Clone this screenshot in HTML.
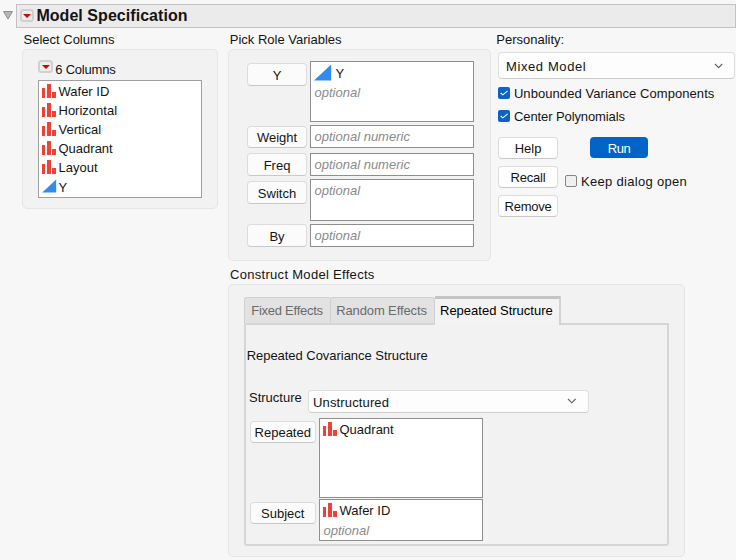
<!DOCTYPE html>
<html><head><meta charset="utf-8">
<style>
html,body{margin:0;padding:0;}
body{width:736px;height:560px;overflow:hidden;background:#f7f7f7;position:relative;font-family:"Liberation Sans",sans-serif;font-size:13px;color:#141414;}
.a{position:absolute;}
.t{position:absolute;white-space:nowrap;line-height:15px;}
.panel{position:absolute;background:#f2f2f2;border:1px solid #e6e6e6;border-radius:5px;box-sizing:border-box;}
.btn{position:absolute;box-sizing:border-box;background:#fbfbfb;border:1px solid #dcdcdc;border-bottom-color:#c8c8c8;border-radius:4px;text-align:center;line-height:15px;}
.box{position:absolute;box-sizing:border-box;background:#fff;border:1px solid #8f8f8f;}
.opt{color:#8a8a8a;font-style:italic;}
.bars{position:absolute;width:15px;height:14px;}
.bars i{position:absolute;bottom:0.5px;background:#ef4136;width:3.2px;}
.bars i:nth-child(1){left:0.1px;height:9.5px;}
.bars i:nth-child(2){left:5px;height:13.5px;width:3.6px;}
.bars i:nth-child(3){left:10.2px;height:5.8px;width:3.7px;}
.redbtn{position:absolute;box-sizing:border-box;border:2px solid #d0d0d0;border-radius:3.5px;background:#ededed;}
.redbtn:after{content:"";position:absolute;left:1.9px;top:2.9px;border-left:4.2px solid transparent;border-right:4.2px solid transparent;border-top:4.5px solid #d40000;}
.cb{position:absolute;width:12px;height:12px;box-sizing:border-box;border-radius:2px;background:#0c63c7;}
.tab{position:absolute;box-sizing:border-box;background:#e2e2e2;border:1.5px solid #d0d0d0;border-bottom:none;border-radius:3px 3px 0 0;color:#6a6a6a;line-height:15px;}
.dd{position:absolute;box-sizing:border-box;background:#fdfdfd;border:1px solid #dedede;border-bottom-color:#cdcdcd;border-radius:4px;}
</style></head><body>

<!-- header -->
<svg class="a" style="left:2px;top:10px;" width="12" height="10"><path d="M1.5 1.5 L10.5 1.5 L6 9 Z" fill="#b6b6b6" stroke="#8e8e8e" stroke-width="1" stroke-linejoin="round"/></svg>
<div class="a" style="left:16px;top:4px;width:720px;height:24px;box-sizing:border-box;background:#ebebeb;border:1px solid #c2c2c2;border-right-width:1px;"></div>
<div class="redbtn" style="left:19.5px;top:9.2px;width:14px;height:12.5px;"></div>
<div class="t" style="left:36.4px;top:7.4px;font-size:16px;line-height:18px;font-weight:bold;letter-spacing:0.05px;">Model Specification</div>

<!-- Select Columns -->
<div class="t" style="left:23.5px;top:32px;">Select Columns</div>
<div class="panel" style="left:22px;top:49px;width:196px;height:160px;"></div>
<div class="redbtn" style="left:38px;top:60px;width:15px;height:13px;"></div>
<div class="t" style="left:55.2px;top:62px;letter-spacing:-0.2px;">6 Columns</div>
<div class="box" style="left:38px;top:80px;width:164px;height:118px;border-color:#a0a0a0;"></div>
<div class="bars" style="left:42px;top:84px;"><i></i><i></i><i></i></div>
<div class="t" style="left:58.5px;top:84px;">Wafer ID</div>
<div class="bars" style="left:42px;top:103px;"><i></i><i></i><i></i></div>
<div class="t" style="left:58.5px;top:103px;">Horizontal</div>
<div class="bars" style="left:42px;top:122px;"><i></i><i></i><i></i></div>
<div class="t" style="left:58.5px;top:122px;">Vertical</div>
<div class="bars" style="left:42px;top:141px;"><i></i><i></i><i></i></div>
<div class="t" style="left:58.5px;top:141px;">Quadrant</div>
<div class="bars" style="left:42px;top:160px;"><i></i><i></i><i></i></div>
<div class="t" style="left:58.5px;top:160px;">Layout</div>
<svg class="a" style="left:42px;top:179px;" width="15" height="14"><path d="M0.2 13.5 L14.2 13.5 L14.2 0.4 Z" fill="#2f8cec"/></svg>
<div class="t" style="left:58.5px;top:179.5px;">Y</div>

<!-- Pick Role Variables -->
<div class="t" style="left:229.8px;top:32px;">Pick Role Variables</div>
<div class="panel" style="left:228px;top:49px;width:263px;height:212px;"></div>
<div class="btn" style="left:247px;top:63px;width:60px;height:23px;padding-top:3.5px;">Y</div>
<div class="box" style="left:310px;top:61px;width:164px;height:61px;"></div>
<svg class="a" style="left:314px;top:64px;" width="18" height="17"><path d="M0 16.6 L17.2 16.6 L17.2 0.4 Z" fill="#2f8cec"/></svg>
<div class="t" style="left:335.5px;top:66px;">Y</div>
<div class="t opt" style="left:314.5px;top:85px;">optional</div>

<div class="btn" style="left:247px;top:125.5px;width:60px;height:22px;padding-top:3.5px;">Weight</div>
<div class="box" style="left:310px;top:125px;width:164px;height:23px;"></div>
<div class="t opt" style="left:314.5px;top:128.5px;">optional numeric</div>

<div class="btn" style="left:247px;top:153px;width:60px;height:22.5px;padding-top:3.5px;">Freq</div>
<div class="box" style="left:310px;top:153px;width:164px;height:23px;"></div>
<div class="t opt" style="left:314.5px;top:156.5px;">optional numeric</div>

<div class="btn" style="left:247px;top:181px;width:60px;height:22.5px;padding-top:3.5px;">Switch</div>
<div class="box" style="left:310px;top:179px;width:164px;height:42px;"></div>
<div class="t opt" style="left:314.5px;top:182.5px;">optional</div>

<div class="btn" style="left:247px;top:224px;width:60px;height:23px;padding-top:3.5px;">By</div>
<div class="box" style="left:310px;top:224px;width:164px;height:23px;"></div>
<div class="t opt" style="left:314.5px;top:227.5px;">optional</div>

<!-- Personality -->
<div class="t" style="left:496.3px;top:31.5px;">Personality:</div>
<div class="dd" style="left:498px;top:52px;width:237px;height:27px;"></div>
<div class="t" style="left:506px;top:58.5px;letter-spacing:0.6px;">Mixed Model</div>
<svg class="a" style="left:713.5px;top:62.5px;" width="10" height="7"><path d="M1 1 L4.6 4.6 L8.2 1" fill="none" stroke="#606060" stroke-width="1.1"/></svg>

<div class="cb" style="left:498px;top:87px;"><svg width="12" height="12" style="position:absolute;left:0;top:0"><path d="M2.7 6 L4.8 7.8 L9.7 3.9" fill="none" stroke="#fff" stroke-width="1.05"/></svg></div>
<div class="t" style="left:513.9px;top:86px;letter-spacing:0.07px;">Unbounded Variance Components</div>
<div class="cb" style="left:498px;top:110px;"><svg width="12" height="12" style="position:absolute;left:0;top:0"><path d="M2.7 6 L4.8 7.8 L9.7 3.9" fill="none" stroke="#fff" stroke-width="1.05"/></svg></div>
<div class="t" style="left:514px;top:109px;letter-spacing:-0.1px;">Center Polynomials</div>

<div class="btn" style="left:498px;top:136.5px;width:60px;height:22px;padding-top:3px;background:#fff;">Help</div>
<div class="a" style="left:590px;top:137px;width:58px;height:21px;background:#0364c8;border-radius:4px;color:#fff;text-align:center;line-height:15px;box-sizing:border-box;padding-top:3.5px;letter-spacing:-0.5px;">Run</div>
<div class="btn" style="left:498px;top:165.5px;width:60px;height:22px;padding-top:3px;background:#fff;letter-spacing:-0.2px;">Recall</div>
<div class="a" style="left:565px;top:175px;width:12px;height:12px;box-sizing:border-box;border:1px solid #858585;border-radius:2px;background:#f0f0f0;"></div>
<div class="t" style="left:581px;top:173.5px;letter-spacing:0.3px;">Keep dialog open</div>
<div class="btn" style="left:498px;top:194.5px;width:60px;height:22px;padding-top:3px;background:#fff;letter-spacing:-0.25px;">Remove</div>

<!-- Construct Model Effects -->
<div class="t" style="left:230px;top:266.5px;letter-spacing:0.3px;">Construct Model Effects</div>
<div class="panel" style="left:228px;top:284px;width:457px;height:272.5px;"></div>
<div class="tab" style="left:244px;top:297px;width:87px;height:26px;padding-left:6.2px;padding-top:5px;letter-spacing:-0.25px;border-right:none;">Fixed Effects</div>
<div class="tab" style="left:329.5px;top:297px;width:105px;height:26px;padding-left:5.7px;padding-top:5px;letter-spacing:-0.12px;">Random Effects</div>
<div class="a" style="left:244px;top:322.5px;width:424.7px;height:223.3px;box-sizing:border-box;border:2px solid #d6d6d6;border-radius:0 0 3px 3px;"></div>
<div class="tab" style="left:434.5px;top:296px;width:126.2px;height:28.5px;background:#f3f3f3;border-left:none;border-top:3px solid #c4c4c4;border-right:2px solid #d2d2d2;border-radius:0;color:#000;padding-left:5.5px;padding-top:3.8px;">Repeated Structure</div>

<div class="t" style="left:246.7px;top:347.5px;letter-spacing:-0.04px;">Repeated Covariance Structure</div>
<div class="t" style="left:249px;top:390px;">Structure</div>
<div class="dd" style="left:308px;top:390px;width:281px;height:22.5px;"></div>
<div class="t" style="left:313px;top:395px;letter-spacing:0.14px;">Unstructured</div>
<svg class="a" style="left:567.3px;top:398.2px;" width="10" height="7"><path d="M1 1 L4.8 4.8 L8.6 1" fill="none" stroke="#626262" stroke-width="1.15"/></svg>

<div class="btn" style="left:250px;top:421px;width:65.5px;height:22px;padding-top:3px;">Repeated</div>
<div class="box" style="left:319px;top:418px;width:164px;height:79.5px;"></div>
<div class="bars" style="left:323px;top:422px;"><i></i><i></i><i></i></div>
<div class="t" style="left:339.5px;top:422px;">Quadrant</div>

<div class="btn" style="left:250px;top:501.5px;width:65.5px;height:22px;padding-top:3px;">Subject</div>
<div class="box" style="left:319px;top:499px;width:164px;height:41.5px;"></div>
<div class="bars" style="left:323px;top:503px;"><i></i><i></i><i></i></div>
<div class="t" style="left:339.5px;top:503px;">Wafer ID</div>
<div class="t opt" style="left:323.5px;top:522.5px;">optional</div>

</body></html>
